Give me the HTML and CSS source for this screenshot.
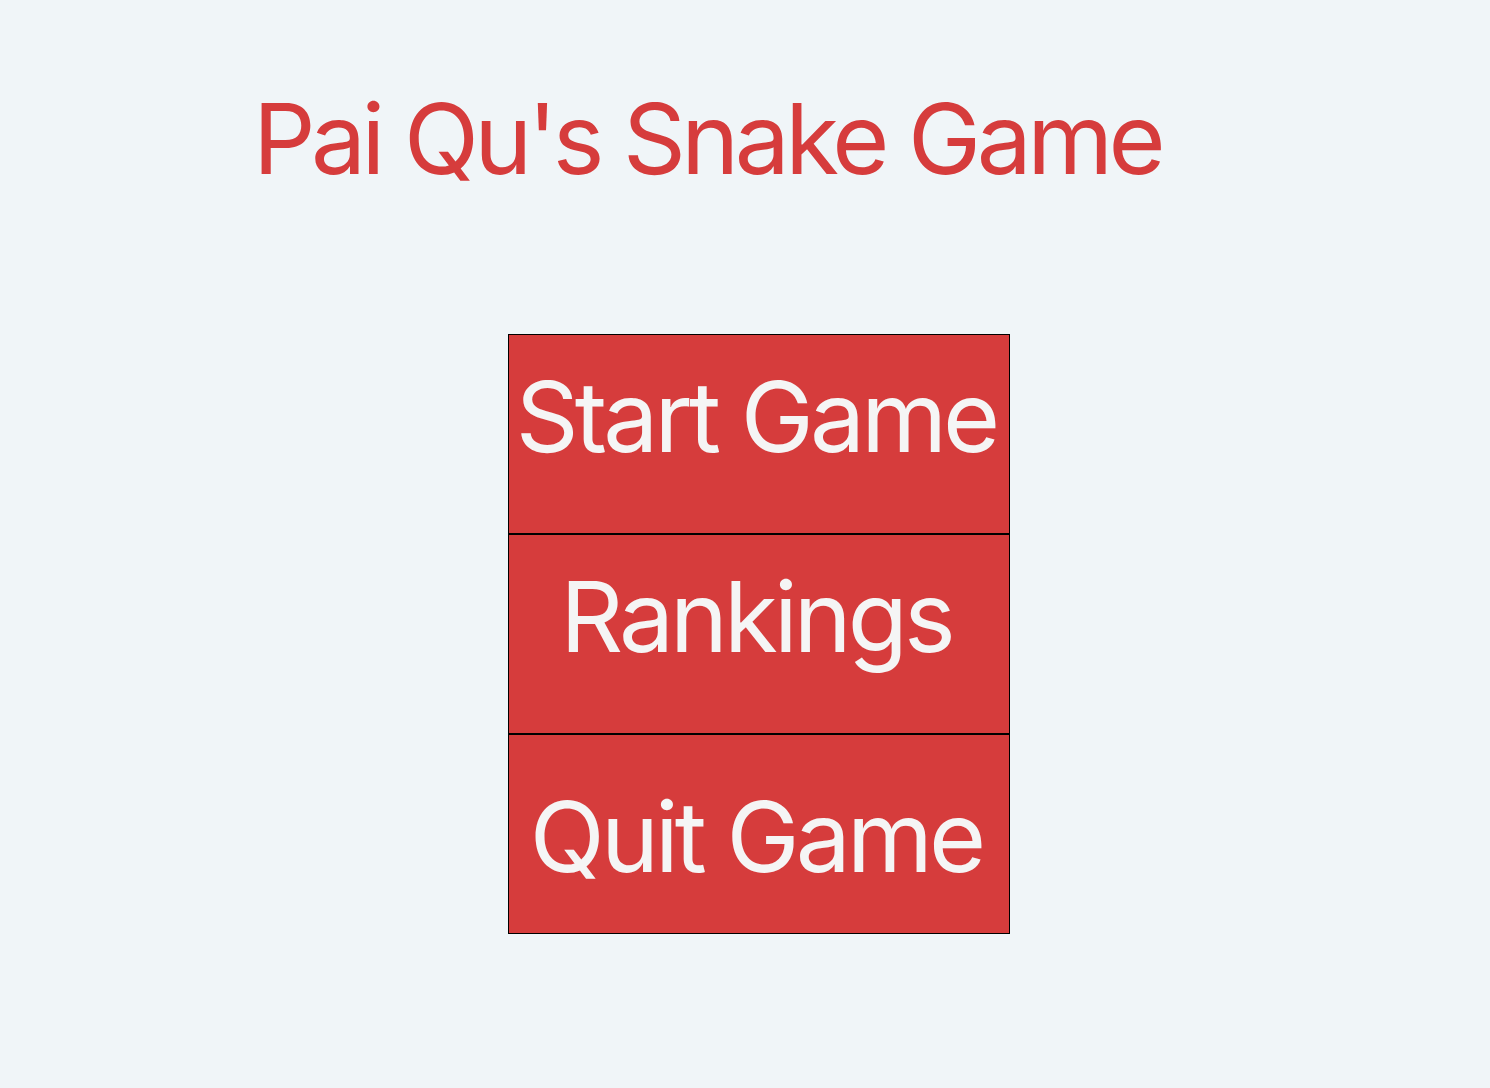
FILE: index.html
```html
<!DOCTYPE html>
<html lang="en">
<head>
<meta charset="utf-8">
<title>Pai Qu's Snake Game</title>
<link rel="stylesheet" href="styles.css">
</head>
<body>
<main class="page">
  <h1 class="title">Pai Qu's Snake Game</h1>
  <nav class="menu">
    <button class="menu-btn">Start Game</button>
    <button class="menu-btn">Rankings</button>
    <button class="menu-btn menu-btn--low">Quit Game</button>
  </nav>
</main>
</body>
</html>
```

FILE: styles.css
```css
html, body {
  margin: 0;
  padding: 0;
  background: #f0f5f8;
  height: 100%;
}
body {
  font-family: Inter, "Noto Sans", sans-serif;
}
.page {
  display: flex;
  flex-direction: column;
  align-items: flex-start;
}
.title {
  margin: 0;
  padding: 79px 0 0 253px;
  font-size: 98px;
  font-weight: 400;
  line-height: 120px;
  letter-spacing: -4.5px;
  color: #d63c3c;
  white-space: nowrap;
}
.menu {
  margin: 135px 0 0 508px;
  display: flex;
  flex-direction: column;
  width: 502px;
}
.menu-btn {
  box-sizing: border-box;
  height: 200px;
  width: 100%;
  margin: 0;
  padding: 22px 6px 0 0;
  border: 1px solid #000;
  background: #d63c3c;
  color: #f5f5f5;
  font-family: Inter, "Noto Sans", sans-serif;
  font-size: 98px;
  font-weight: 400;
  line-height: 120px;
  letter-spacing: -3.9px;
  text-align: center;
  white-space: nowrap;
  display: flex;
  justify-content: center;
  align-items: flex-start;
}
.menu-btn--low {
  padding-top: 42px;
}
```
